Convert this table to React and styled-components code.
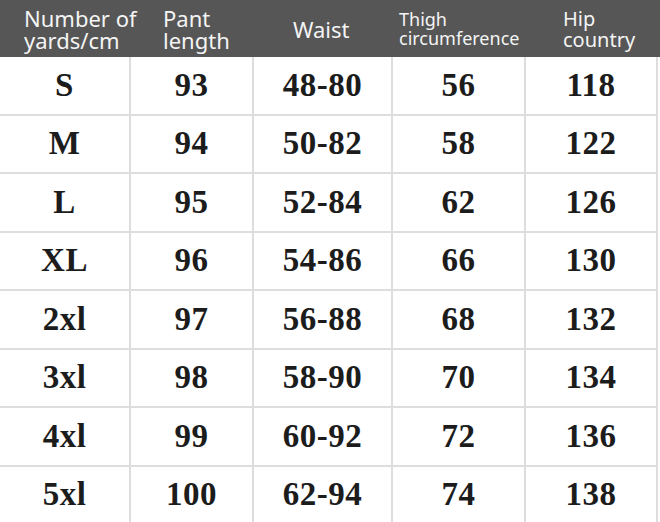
import React from "react";
import styled, { createGlobalStyle } from "styled-components";

const Global = createGlobalStyle`
  html, body { margin: 0; padding: 0; background: #ffffff; }
`;

const Page = styled.div`
  width: 660px;
  height: 522px;
  overflow: hidden;
  background: #ffffff;
`;

const HeaderRow = styled.div`
  display: grid;
  grid-template-columns: 130px 123px 139px 133px 135px;
  height: 57px;
  background: #565656;
`;

const HeaderCell = styled.div`
  display: flex;
  flex-direction: column;
  justify-content: center;
  padding-left: ${(p) => p.$pad}px;
  font-family: "Noto Sans", "Noto Sans CJK SC", sans-serif;
  font-size: ${(p) => p.$size}px;
  line-height: ${(p) => p.$lh}px;
  color: #f4f4f4;
  white-space: nowrap;
`;

const Body = styled.div`
  display: grid;
  width: 656px;
  grid-template-columns: 129px 121px 137px 131px 130px;
  grid-auto-rows: 56.5px;
  column-gap: 2px;
  row-gap: 2px;
  padding-right: 2px;
  background: #dddddd;
`;

const Cell = styled.div`
  display: flex;
  align-items: center;
  justify-content: center;
  background: #ffffff;
  font-family: "Liberation Serif", "Times New Roman", serif;
  font-weight: bold;
  font-size: 33px;
  letter-spacing: 0.5px;
  color: #1c1c1c;
`;

const headers = [
  { lines: ["Number of", "yards/cm"], pad: 24, size: 22, lh: 22 },
  { lines: ["Pant", "length"], pad: 33, size: 22, lh: 22 },
  { lines: ["Waist"], pad: 40, size: 22, lh: 22 },
  { lines: ["Thigh", "circumference"], pad: 7, size: 18, lh: 19 },
  { lines: ["Hip", "country"], pad: 38, size: 20, lh: 21 },
];

const rows = [
  ["S", "93", "48-80", "56", "118"],
  ["M", "94", "50-82", "58", "122"],
  ["L", "95", "52-84", "62", "126"],
  ["XL", "96", "54-86", "66", "130"],
  ["2xl", "97", "56-88", "68", "132"],
  ["3xl", "98", "58-90", "70", "134"],
  ["4xl", "99", "60-92", "72", "136"],
  ["5xl", "100", "62-94", "74", "138"],
];

export default function App() {
  return (
    <Page>
      <Global />
      <HeaderRow>
        {headers.map((h, i) => (
          <HeaderCell key={i} $pad={h.pad} $size={h.size} $lh={h.lh}>
            {h.lines.map((l, j) => (
              <span key={j}>{l}</span>
            ))}
          </HeaderCell>
        ))}
      </HeaderRow>
      <Body>
        {rows.map((r, i) =>
          r.map((v, j) => <Cell key={`${i}-${j}`}>{v}</Cell>)
        )}
      </Body>
    </Page>
  );
}
